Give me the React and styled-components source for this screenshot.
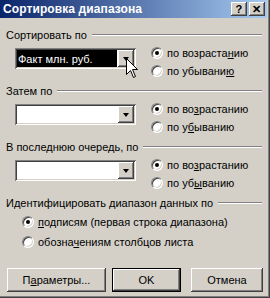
import React from 'react';
import styled, { createGlobalStyle } from 'styled-components';

const Global = createGlobalStyle`
  html, body {
    margin: 0;
    padding: 0;
    background: #d4d0c8;
  }
  body {
    font-family: Tahoma, "Liberation Sans", Arial, sans-serif;
    font-size: 11px;
    color: #000;
  }
`;

const Window = styled.div`
  position: relative;
  width: 270px;
  height: 298px;
  box-sizing: border-box;
  padding: 0 3px 1px 0;
  background: #d4d0c8;
  box-shadow: inset -1px -1px #404040, inset -2px -2px #808080;
  display: flex;
  flex-direction: column;
  overflow: hidden;
`;

const TitleBar = styled.div`
  height: 18px;
  display: flex;
  align-items: center;
  padding: 0 2px 0 3px;
  background: linear-gradient(to right, #0a246a, #a6caf0);
  color: #fff;
  font-weight: bold;
  font-size: 12px;
  letter-spacing: 0.1px;
`;

const Title = styled.span`
  flex: 1;
`;

const CaptionButton = styled.div`
  width: 16px;
  height: 14px;
  box-sizing: border-box;
  margin-left: ${(p) => (p.$gap ? '2px' : '0')};
  background: #d4d0c8;
  box-shadow: inset -1px -1px #404040, inset 1px 1px #fff, inset -2px -2px #808080;
  display: flex;
  align-items: center;
  justify-content: center;
  color: #000;
  font-size: 11px;
  font-weight: bold;
  line-height: 1;
`;

const Body = styled.div`
  padding-top: 10px;
  display: flex;
  flex-direction: column;
  gap: 4px;
`;

const Section = styled.div`
  display: flex;
  flex-direction: column;
`;

const Legend = styled.div`
  height: 14px;
  display: flex;
  align-items: center;
  gap: 5px;
  padding: 0 5px 0 6px;
  white-space: nowrap;

  &::after {
    content: '';
    flex: 1;
    height: 0;
    border-top: 1px solid #808080;
    border-bottom: 1px solid #fff;
  }
`;

const SortRow = styled.div`
  margin-top: 2px;
  display: grid;
  grid-template-columns: 121px 1fr;
  column-gap: 15px;
  padding-left: 15px;
  align-items: start;
`;

const ComboWrap = styled.div`
  position: relative;
  margin-top: 4px;
`;

const Combo = styled.div`
  height: 21px;
  box-sizing: border-box;
  padding: 2px;
  display: flex;
  background: #fff;
  box-shadow: inset 1px 1px #808080, inset -1px -1px #fff, inset 2px 2px #404040, inset -2px -2px #d4d0c8;
`;

const ComboValue = styled.div`
  flex: 1;
  display: flex;
  align-items: center;
  padding-left: 1px;
  margin-right: 1px;
  background: ${(p) => (p.$selected ? '#000' : '#fff')};
  color: ${(p) => (p.$selected ? '#fff' : '#000')};
  white-space: nowrap;
  overflow: hidden;
`;

const DropButton = styled.div`
  width: 16px;
  height: 17px;
  box-sizing: border-box;
  background: #d4d0c8;
  box-shadow: inset -1px -1px #404040, inset 1px 1px #fff, inset -2px -2px #808080;
  display: flex;
  align-items: center;
  justify-content: center;

  &::before {
    content: '';
    width: 0;
    height: 0;
    border-left: 3.5px solid transparent;
    border-right: 3.5px solid transparent;
    border-top: 4px solid #000;
  }
`;

const Cursor = styled.svg`
  position: absolute;
  left: 111px;
  top: 10px;
`;

const RadioList = styled.div`
  display: flex;
  flex-direction: column;
  padding-left: ${(p) => p.$indent || 0}px;
`;

const RadioRow = styled.div`
  height: ${(p) => p.$h || 18}px;
  display: flex;
  align-items: center;
  gap: 4px;
  white-space: nowrap;
`;

const RadioBox = styled.span`
  position: relative;
  width: 12px;
  height: 12px;
  box-sizing: border-box;
  border-radius: 50%;
  background: #fff;
  border: 1px solid;
  border-color: #808080 #fff #fff #808080;
  box-shadow: inset 1px 1px #404040, inset -1px -1px #d4d0c8;
  flex-shrink: 0;

  &::after {
    content: '';
    display: ${(p) => (p.$checked ? 'block' : 'none')};
    position: absolute;
    left: 3px;
    top: 3px;
    width: 4px;
    height: 4px;
    border-radius: 50%;
    background: #000;
  }
`;

const Footer = styled.div`
  margin-top: 16px;
  display: flex;
  padding-left: 7px;
`;

const Button = styled.div`
  width: ${(p) => p.$w}px;
  height: 24px;
  margin-left: ${(p) => p.$ml || 0}px;
  box-sizing: border-box;
  display: flex;
  align-items: center;
  justify-content: center;
  background: #d4d0c8;
  box-shadow: ${(p) =>
    p.$default
      ? 'inset 0 0 0 1px #000, inset -2px -2px #404040, inset 2px 2px #fff, inset -3px -3px #808080'
      : 'inset -1px -1px #404040, inset 1px 1px #fff, inset -2px -2px #808080'};
`;

const Radio = ({ checked, h, children }) => (
  <RadioRow $h={h}>
    <RadioBox $checked={checked} />
    <span>{children}</span>
  </RadioRow>
);

const SortSection = ({ label, value, asc, desc, cursor }) => (
  <Section>
    <Legend>{label}</Legend>
    <SortRow>
      <ComboWrap>
        <Combo>
          <ComboValue $selected={!!value}>{value}</ComboValue>
          <DropButton />
        </Combo>
        {cursor && (
          <Cursor width="13" height="21" viewBox="0 0 13 21">
            <path
              d="M0.5 0.5 L0.5 16.5 L4.5 12.5 L7.5 19.5 L9.5 18.5 L6.5 11.5 L11.5 11.5 Z"
              fill="#fff"
              stroke="#000"
              strokeWidth="1"
            />
          </Cursor>
        )}
      </ComboWrap>
      <RadioList>
        <Radio checked>{asc}</Radio>
        <Radio>{desc}</Radio>
      </RadioList>
    </SortRow>
  </Section>
);

export default function App() {
  return (
    <>
      <Global />
      <Window>
        <TitleBar>
          <Title>Сортировка диапазона</Title>
          <CaptionButton>?</CaptionButton>
          <CaptionButton $gap>✕</CaptionButton>
        </TitleBar>
        <Body>
          <SortSection
            label="Сортировать по"
            value="Факт млн. руб."
            cursor
            asc={<>по возраста<u>н</u>ию</>}
            desc={<>по убывани<u>ю</u></>}
          />
          <SortSection
            label="Затем по"
            asc={<>по во<u>з</u>растанию</>}
            desc={<>по у<u>б</u>ыванию</>}
          />
          <SortSection
            label="В последнюю очередь, по"
            asc={<>по во<u>з</u>растанию</>}
            desc={<>по уб<u>ы</u>ванию</>}
          />
          <Section>
            <Legend>Идентифицировать диапазон данных по</Legend>
            <RadioList $indent={22} style={{ marginTop: 2 }}>
              <Radio checked h={20}>
                <u>п</u>одписям (первая строка диапазона)
              </Radio>
              <Radio h={20}>
                обозна<u>ч</u>ениям столбцов листа
              </Radio>
            </RadioList>
          </Section>
        </Body>
        <Footer>
          <Button $w={99}>
            <span>
              П<u>а</u>раметры...
            </span>
          </Button>
          <Button $w={69} $ml={6} $default>
            OK
          </Button>
          <Button $w={72} $ml={10}>
            Отмена
          </Button>
        </Footer>
      </Window>
    </>
  );
}
